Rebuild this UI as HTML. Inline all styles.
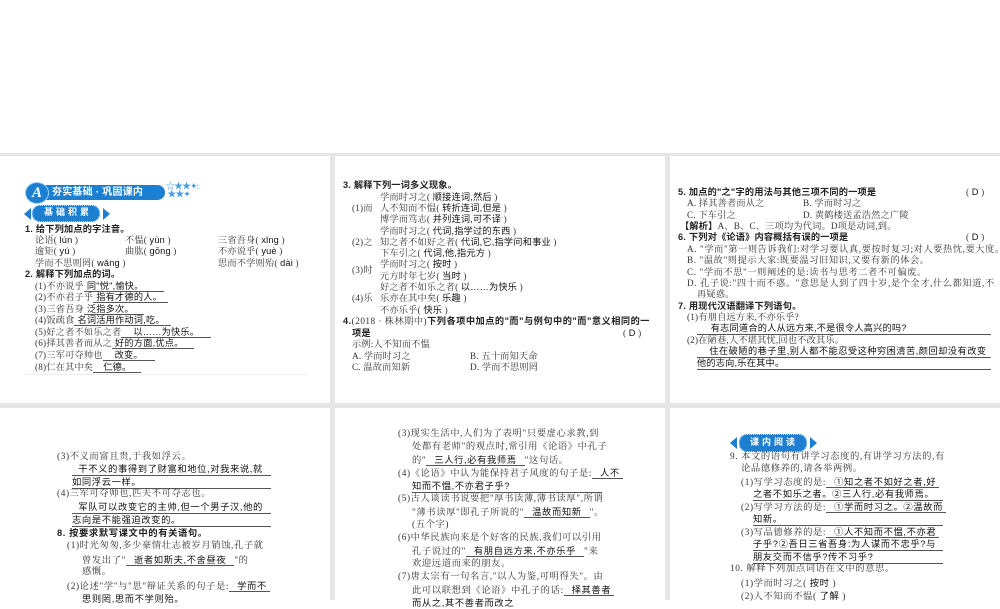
<!DOCTYPE html>
<html><head><meta charset="utf-8"><style>
body{margin:0;width:1000px;height:600px;position:relative;overflow:hidden;background:#fff;font-family:"Liberation Serif","Noto Serif CJK SC",serif;color:#333}
.bg{position:absolute;left:0;top:153px;width:1000px;height:447px;background:#e6e6e6}
.p{position:absolute;background:#fff}
.l{position:absolute;white-space:nowrap;font-size:9.2px;line-height:11px;letter-spacing:0.2px}
.b{font-family:"Liberation Sans","Noto Sans CJK SC",sans-serif;font-weight:bold;color:#222}
.a{font-family:"Liberation Sans","Noto Sans CJK SC",sans-serif;color:#111;border-bottom:1px solid #555;padding:0 3px}
.s{font-family:"Liberation Sans","Noto Sans CJK SC",sans-serif;color:#111}
.w{font-size:9.3px;line-height:12px;letter-spacing:0.6px}
</style></head><body>
<div class="bg"></div>
<div class="p" style="left:0;top:156px;width:330px;height:247px"></div>
<div class="p" style="left:335px;top:156px;width:330px;height:247px"></div>
<div class="p" style="left:670px;top:156px;width:330px;height:247px"></div>
<div class="p" style="left:0;top:408px;width:330px;height:192px"></div>
<div class="p" style="left:335px;top:408px;width:330px;height:192px"></div>
<div class="p" style="left:670px;top:408px;width:330px;height:192px"></div>

<!-- panel1 header -->
<div style="position:absolute;left:45px;top:185px;width:120px;height:15px;background:#1c7fd2;border-radius:0 8px 8px 0"></div>
<div style="position:absolute;left:25px;top:182px;width:22px;height:20px;border-radius:50%;background:#1c7fd2;border:1px solid #9cd0f5;color:#fff;font:italic bold 15px/20px 'Liberation Serif',serif;text-align:center">A</div>
<div class="l b" style="left:52px;top:186px;color:#fff;font-size:10px;line-height:13px">夯实基础 · 巩固课内</div>
<div class="l" style="left:166px;top:182px;color:#4a9ee0;font-size:9px;line-height:8px;letter-spacing:-1px">☆★★✦:<br>&nbsp;★★✦</div>
<div style="position:absolute;left:24px;top:208px;border-style:solid;border-width:6px 7px 6px 0;border-color:transparent #1c7fd2 transparent transparent"></div>
<div style="position:absolute;left:32px;top:205px;width:66px;height:15px;background:#1c7fd2;border-radius:8px;border:1px dotted #bfe0fa"></div>
<div class="l b" style="left:44px;top:207px;color:#fff;font-size:9px;letter-spacing:3px">基础积累</div>
<div style="position:absolute;left:103px;top:208px;border-style:solid;border-width:6px 0 6px 7px;border-color:transparent transparent transparent #1c7fd2"></div>

<div class="l b" style="left:25px;top:224px">1. 给下列加点的字注音。</div>
<div class="l" style="left:35px;top:235px">论语( <span class="s">lún</span> )</div>
<div class="l" style="left:125px;top:235px">不愠( <span class="s">yùn</span> )</div>
<div class="l" style="left:218px;top:235px">三省吾身( <span class="s">xǐng</span> )</div>
<div class="l" style="left:35px;top:246px">逾矩( <span class="s">yú</span> )</div>
<div class="l" style="left:125px;top:246px">曲肱( <span class="s">gōng</span> )</div>
<div class="l" style="left:218px;top:246px">不亦说乎( <span class="s">yuè</span> )</div>
<div class="l" style="left:35px;top:258px">学而不思则罔( <span class="s">wǎng</span> )</div>
<div class="l" style="left:218px;top:258px">思而不学则殆( <span class="s">dài</span> )</div>
<div class="l b" style="left:25px;top:269px">2. 解释下列加点的词。</div>
<div class="l" style="left:35px;top:281px">(1)不亦说乎<span class="a" style="padding-right:20px">同"悦",愉快。</span></div>
<div class="l" style="left:35px;top:292px">(2)不亦君子乎<span class="a" style="padding-right:6px">指有才德的人。</span></div>
<div class="l" style="left:35px;top:304px">(3)三省吾身<span class="a" style="padding-right:10px">泛指多次。</span></div>
<div class="l" style="left:35px;top:315px">(4)饭疏食<span class="a" style="padding-right:6px">名词活用作动词,吃。</span></div>
<div class="l" style="left:35px;top:327px">(5)好之者不如乐之者<span class="a" style="padding:0 12px">以……为快乐。</span></div>
<div class="l" style="left:35px;top:338px">(6)择其善者而从之<span class="a" style="padding-right:10px">好的方面,优点。</span></div>
<div class="l" style="left:35px;top:350px">(7)三军可夺帅也<span class="a" style="padding:0 12px">改变。</span></div>
<div class="l" style="left:35px;top:362px">(8)仁在其中矣<span class="a" style="padding:0 10px">仁德。</span></div>
<div style="position:absolute;left:25px;top:374px;width:282px;height:1px;background:#eee"></div>

<!-- panel2 -->
<div class="l b" style="left:343px;top:180px">3. 解释下列一词多义现象。</div>
<div class="l" style="left:352px;top:203px">(1)而</div>
<div class="l" style="left:380px;top:192px">学而时习之( <span class="s">顺接连词,然后</span> )</div>
<div class="l" style="left:380px;top:203px">人不知而不愠( <span class="s">转折连词,但是</span> )</div>
<div class="l" style="left:380px;top:214px">博学而笃志( <span class="s">并列连词,可不译</span> )</div>
<div class="l" style="left:352px;top:237px">(2)之</div>
<div class="l" style="left:380px;top:226px">学而时习之( <span class="s">代词,指学过的东西</span> )</div>
<div class="l" style="left:380px;top:237px">知之者不如好之者( <span class="s">代词,它,指学问和事业</span> )</div>
<div class="l" style="left:380px;top:248px">下车引之( <span class="s">代词,他,指元方</span> )</div>
<div class="l" style="left:352px;top:265px">(3)时</div>
<div class="l" style="left:380px;top:259px">学而时习之( <span class="s">按时</span> )</div>
<div class="l" style="left:380px;top:271px">元方时年七岁( <span class="s">当时</span> )</div>
<div class="l" style="left:352px;top:293px">(4)乐</div>
<div class="l" style="left:380px;top:282px">好之者不如乐之者( <span class="s">以……为快乐</span> )</div>
<div class="l" style="left:380px;top:293px">乐亦在其中矣( <span class="s">乐趣</span> )</div>
<div class="l" style="left:380px;top:305px">不亦乐乎( <span class="s">快乐</span> )</div>
<div class="l" style="left:343px;top:316px;letter-spacing:0.5px"><span class="b">4.</span>(2018 · 株林期中)<span class="b">下列各项中加点的"而"与例句中的"而"意义相同的一</span></div>
<div class="l b" style="left:352px;top:328px">项是</div>
<div class="l" style="left:623px;top:328px">( <span class="s">D</span> )</div>
<div class="l" style="left:352px;top:339px">示例:人不知而不愠</div>
<div class="l" style="left:352px;top:351px">A. 学而时习之</div>
<div class="l" style="left:470px;top:351px">B. 五十而知天命</div>
<div class="l" style="left:352px;top:362px">C. 温故而知新</div>
<div class="l" style="left:470px;top:362px">D. 学而不思则罔</div>

<!-- panel3 -->
<div class="l b" style="left:678px;top:187px">5. 加点的"之"字的用法与其他三项不同的一项是</div>
<div class="l" style="left:966px;top:187px">( <span class="s">D</span> )</div>
<div class="l" style="left:687px;top:198px">A. 择其善者而从之</div>
<div class="l" style="left:803px;top:198px">B. 学而时习之</div>
<div class="l" style="left:687px;top:210px">C. 下车引之</div>
<div class="l" style="left:803px;top:210px">D. 黄鹤楼送孟浩然之广陵</div>
<div class="l" style="left:680px;top:221px"><span class="b">【解析】</span>A、B、C、三项均为代词。D项是动词,到。</div>
<div class="l b" style="left:678px;top:232px">6. 下列对《论语》内容概括有误的一项是</div>
<div class="l" style="left:966px;top:232px">( <span class="s">D</span> )</div>
<div class="l" style="left:687px;top:244px;letter-spacing:0.6px">A. "学而"第一则告诉我们:对学习要认真,要按时复习;对人要热忱,要大度。</div>
<div class="l" style="left:687px;top:255px;letter-spacing:0.6px">B. "温故"则提示大家:既要温习旧知识,又要有新的体会。</div>
<div class="l" style="left:687px;top:267px;letter-spacing:0.6px">C. "学而不思"一则阐述的是:读书与思考二者不可偏废。</div>
<div class="l" style="left:687px;top:278px;letter-spacing:0.6px">D. 孔子说:"四十而不惑。"意思是人到了四十岁,是个全才,什么都知道,不</div>
<div class="l" style="left:697px;top:289px">再疑惑。</div>
<div class="l b" style="left:678px;top:301px">7. 用现代汉语翻译下列语句。</div>
<div class="l" style="left:687px;top:312px">(1)有朋自远方来,不亦乐乎?</div>
<div class="l s" style="left:697px;top:323px;width:294px;border-bottom:1px solid #555">&nbsp;&nbsp;&nbsp;&nbsp;&nbsp;有志同道合的人从远方来,不是很令人高兴的吗?</div>
<div class="l" style="left:687px;top:335px">(2)在陋巷,人不堪其忧,回也不改其乐。</div>
<div class="l s" style="left:697px;top:346px;width:294px;border-bottom:1px solid #555;letter-spacing:0.5px">&nbsp;&nbsp;&nbsp;&nbsp;住在破陋的巷子里,别人都不能忍受这种穷困清苦,颜回却没有改变</div>
<div class="l s" style="left:697px;top:358px;width:294px;border-bottom:1px solid #555">他的志向,乐在其中。</div>

<!-- bottom panel1 -->
<div class="l w" style="left:57px;top:451px">(3)不义而富且贵,于我如浮云。</div>
<div class="l w s" style="left:72px;top:463px;width:199px;border-bottom:1px solid #555">&nbsp;&nbsp;干不义的事得到了财富和地位,对我来说,就</div>
<div class="l w s" style="left:72px;top:476px;width:199px;border-bottom:1px solid #555">如同浮云一样。</div>
<div class="l w" style="left:57px;top:488px">(4)三军可夺帅也,匹夫不可夺志也。</div>
<div class="l w s" style="left:72px;top:501px;width:199px;border-bottom:1px solid #555">&nbsp;&nbsp;军队可以改变它的主帅,但一个男子汉,他的</div>
<div class="l w s" style="left:72px;top:514px;width:199px;border-bottom:1px solid #555">志向是不能强迫改变的。</div>
<div class="l w b" style="left:57px;top:527px">8. 按要求默写课文中的有关语句。</div>
<div class="l w" style="left:67px;top:540px">(1)时光匆匆,多少豪情壮志被岁月销蚀,孔子就</div>
<div class="l w" style="left:82px;top:554px">曾发出了"<span class="a" style="padding:0 8px">逝者如斯夫,不舍昼夜</span>"的</div>
<div class="l w" style="left:82px;top:566px">感慨。</div>
<div class="l w" style="left:67px;top:580px">(2)论述"学"与"思"辩证关系的句子是:<span class="a" style="padding-left:8px">学而不</span></div>
<div class="l w s" style="left:82px;top:593px">思则罔,思而不学则殆。</div>

<!-- bottom panel2 -->
<div class="l w" style="left:398px;top:428px">(3)现实生活中,人们为了表明"只要虚心求教,到</div>
<div class="l w" style="left:412px;top:441px">处都有老师"的观点时,常引用《论语》中孔子</div>
<div class="l w" style="left:412px;top:454px">的"<span class="a" style="padding:0 8px">三人行,必有我师焉</span>"这句话。</div>
<div class="l w" style="left:398px;top:467px">(4)《论语》中认为能保持君子风度的句子是:<span class="a" style="padding-left:8px">人不</span></div>
<div class="l w s" style="left:412px;top:480px;width:190px;border-bottom:1px solid #555">知而不愠,不亦君子乎?</div>
<div class="l w" style="left:398px;top:493px">(5)古人谈读书说要把"厚书读薄,薄书读厚",所谓</div>
<div class="l w" style="left:412px;top:506px">"薄书读厚"即孔子所说的"<span class="a" style="padding:0 8px">温故而知新</span>"。</div>
<div class="l w" style="left:412px;top:519px">(五个字)</div>
<div class="l w" style="left:398px;top:532px">(6)中华民族向来是个好客的民族,我们可以引用</div>
<div class="l w" style="left:412px;top:545px">孔子说过的"<span class="a" style="padding:0 8px">有朋自远方来,不亦乐乎</span>"来</div>
<div class="l w" style="left:412px;top:558px">欢迎远道而来的朋友。</div>
<div class="l w" style="left:398px;top:571px">(7)唐太宗有一句名言,"以人为鉴,可明得失"。由</div>
<div class="l w" style="left:412px;top:584px">此可以联想到《论语》中孔子的话:<span class="a" style="padding-left:8px">择其善者</span></div>
<div class="l w s" style="left:412px;top:597px">而从之,其不善者而改之</div>

<!-- bottom panel3 -->
<div style="position:absolute;left:730px;top:437px;border-style:solid;border-width:6px 7px 6px 0;border-color:transparent #1c7fd2 transparent transparent"></div>
<div style="position:absolute;left:739px;top:434px;width:66px;height:16px;background:#1c7fd2;border-radius:8px;border:1px dotted #bfe0fa"></div>
<div class="l b" style="left:750px;top:437px;color:#fff;font-size:9px;letter-spacing:3px">课内阅读</div>
<div style="position:absolute;left:810px;top:437px;border-style:solid;border-width:6px 0 6px 7px;border-color:transparent transparent transparent #1c7fd2"></div>
<div class="l w" style="left:730px;top:451px">9. 本文的语句有讲学习态度的,有讲学习方法的,有</div>
<div class="l w" style="left:741px;top:463px">论品德修养的,请各举两例。</div>
<div class="l w" style="left:741px;top:476px">(1)写学习态度的是:<span class="a" style="padding-left:8px">①知之者不如好之者,好</span></div>
<div class="l w s" style="left:753px;top:488px;width:190px;border-bottom:1px solid #555">之者不如乐之者。②三人行,必有我师焉。</div>
<div class="l w" style="left:741px;top:501px">(2)写学习方法的是:<span class="a" style="padding-left:8px">①学而时习之。②温故而</span></div>
<div class="l w s" style="left:753px;top:513px;width:190px;border-bottom:1px solid #555">知新。</div>
<div class="l w" style="left:741px;top:526px">(3)写品德修养的是:<span class="a" style="padding-left:8px">①人不知而不愠,不亦君</span></div>
<div class="l w s" style="left:753px;top:538px;width:190px;border-bottom:1px solid #555">子乎?②吾日三省吾身:为人谋而不忠乎?与</div>
<div class="l w s" style="left:753px;top:551px;width:190px;border-bottom:1px solid #555">朋友交而不信乎?传不习乎?</div>
<div class="l w" style="left:730px;top:563px">10. 解释下列加点词语在文中的意思。</div>
<div class="l w" style="left:741px;top:577px">(1)学而时习之( <span class="s">按时</span> )</div>
<div class="l w" style="left:741px;top:590px">(2)人不知而不愠( <span class="s">了解</span> )</div>
</body></html>
